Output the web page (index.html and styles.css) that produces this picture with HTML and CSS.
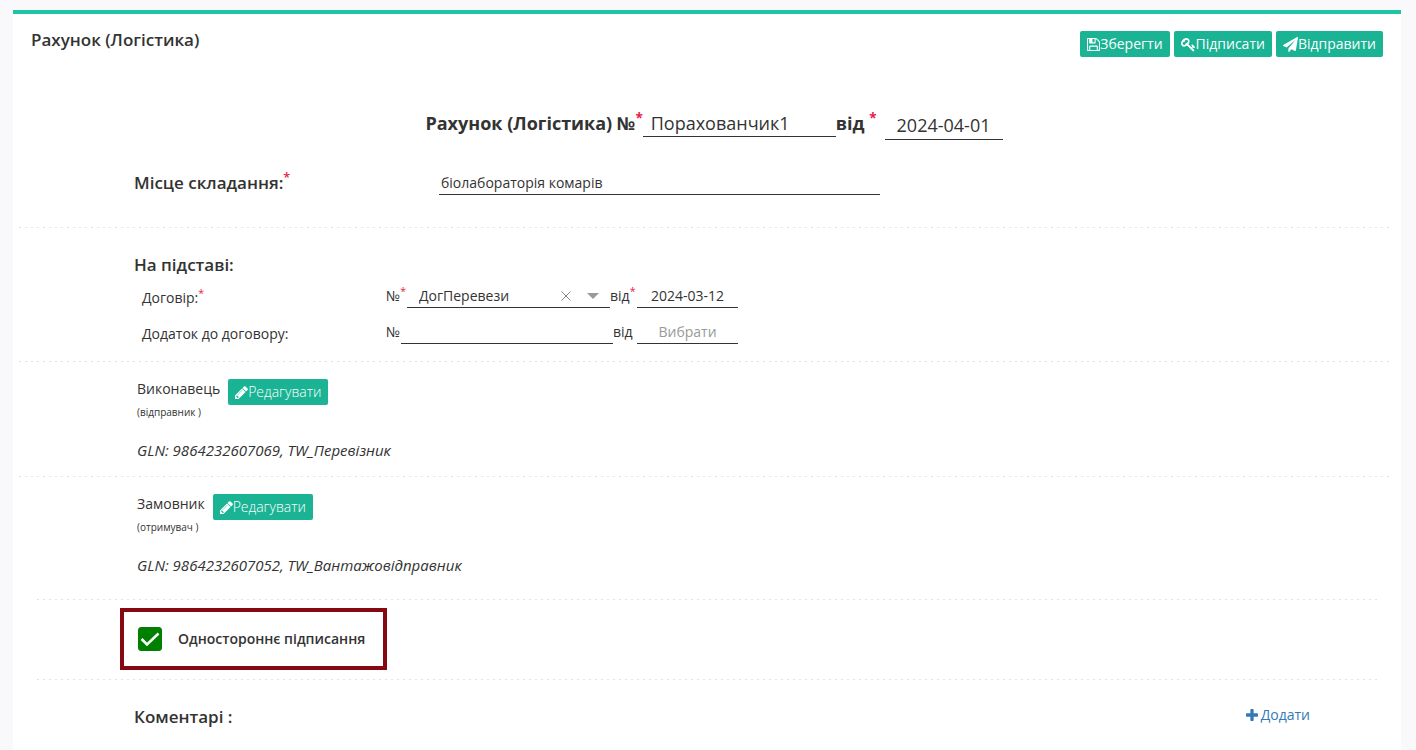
FILE: index.html
```html
<!DOCTYPE html>
<html lang="uk">
<head>
<meta charset="utf-8">
<meta name="viewport" content="width=device-width, initial-scale=1">
<title>Рахунок (Логістика)</title>
<link rel="stylesheet" href="styles.css">
</head>
<body>
<main class="panel">
  <header class="panel-header">
    <h1 class="panel-title">Рахунок (Логістика)</h1>
    <div class="toolbar">
      <button type="button" class="btn"><svg class="icon" viewBox="128 128 1536 1536" aria-hidden="true"><path d="M512 1536h768v-384h-768v384zm896 0h128v-896q0-14-10-38.5t-20-34.5l-281-281q-10-10-34-20t-39-10v416q0 40-28 68t-68 28h-576q-40 0-68-28t-28-68v-416h-128v1280h128v-416q0-40 28-68t68-28h832q40 0 68 28t28 68v416zm-384-928v-320q0-13-9.5-22.5t-22.5-9.5h-192q-13 0-22.5 9.5t-9.5 22.5v320q0 13 9.5 22.5t22.5 9.5h192q13 0 22.5-9.5t9.5-22.5zm640 32v928q0 40-28 68t-68 28h-1344q-40 0-68-28t-28-68v-1344q0-40 28-68t68-28h928q40 0 88 20t76 48l280 280q28 28 48 76t20 88z"/></svg>Зберегти</button>
      <button type="button" class="btn"><svg class="icon icon-wide" viewBox="0 0 1792 1792" aria-hidden="true"><path d="M832 512q0-80-56-136t-136-56-136 56-56 136q0 42 19 83-41-19-83-19-80 0-136 56t-56 136 56 136 136 56 136-56 56-136q0-42-19-83 41 19 83 19 80 0 136-56t56-136zm851 704q0 17-49 66t-66 49q-9 0-28.5-16t-36.5-33-38.5-40-24.5-26l-96 96 220 220q28 28 28 68 0 42-39 81t-81 39q-40 0-68-28l-671-671q-176 131-365 131-163 0-265.5-102.5t-102.5-265.5q0-160 95-313t248-248 313-95q163 0 265.5 102.5t102.5 265.5q0 189-131 365l355 355 96-96q-3-3-26-24.5t-40-38.5-33-36.5-16-28.5q0-17 49-66t66-49q13 0 23 10 6 6 46 44.5t82 79.5 86.5 86 73 78 28.5 41z"/></svg>Підписати</button>
      <button type="button" class="btn"><svg class="icon icon-wide" viewBox="0 0 1792 1792" aria-hidden="true"><path d="M1764 11q33 24 27 64l-256 1536q-5 29-32 45-14 8-31 8-11 0-24-5l-453-185-242 295q-18 23-49 23-13 0-22-4-19-7-30.5-23.5t-11.5-36.5v-349l864-1059-1069 925-395-162q-37-14-40-55-2-40 32-59l1664-960q15-9 32-9 20 0 36 11z"/></svg>Відправити</button>
    </div>
  </header>

  <form>
    <div class="doc-title">
      <label for="doc-number">Рахунок (Логістика) №<sup class="required">*</sup></label>
      <input class="field doc-number" id="doc-number" type="text" value="Порахованчик1">
      <label for="doc-date">від <sup class="required">*</sup></label>
      <input class="field doc-date" id="doc-date" type="text" value="2024-04-01">
    </div>

    <section class="section place">
      <label class="heading" for="place">Місце складання:<sup class="required">*</sup></label>
      <input class="field place-field" id="place" type="text" value="біолабораторія комарів">
    </section>
    <hr class="divider">

    <section class="section basis">
      <h2 class="heading">На підставі:</h2>
      <div class="basis-row">
        <span class="basis-label">Договір:<sup class="required">*</sup></span>
        <label class="number-label number-required" for="contract">№<sup class="required">*</sup></label>
        <div class="combo">
          <input class="combo-input" id="contract" type="text" value="ДогПеревези">
          <button type="button" class="combo-btn" aria-label="Очистити"><svg class="clear" viewBox="0 0 10 10" aria-hidden="true"><path d="M0.500 0.500L9.500 9.500M9.500 0.500L0.500 9.500"/></svg></button>
          <button type="button" class="combo-btn" aria-label="Відкрити"><svg class="arrow" viewBox="0 0 12 6" aria-hidden="true"><path d="M0 0h12L6 6z"/></svg></button>
        </div>
        <label class="date-label date-required" for="contract-date">від<sup class="required">*</sup></label>
        <input class="field date-field" id="contract-date" type="text" value="2024-03-12">
      </div>
      <div class="basis-row">
        <span class="basis-label">Додаток до договору:</span>
        <label class="number-label" for="annex">№</label>
        <input class="field annex-field" id="annex" type="text">
        <label class="date-label" for="annex-date">від</label>
        <input class="field date-field" id="annex-date" type="text" placeholder="Вибрати">
      </div>
    </section>
    <hr class="divider">

    <section class="party">
      <div class="party-head">
        <div><div class="party-name">Виконавець</div><div class="party-role">(відправник )</div></div>
        <button type="button" class="btn btn-light"><svg class="icon" viewBox="128 128 1536 1536" aria-hidden="true"><path d="M491 1536l91-91-235-235-91 91v107h128v128h107zm523-928q0-22-22-22-10 0-17 7l-542 542q-7 7-7 17 0 22 22 22 10 0 17-7l542-542q7-7 7-17zm-54-192l416 416-832 832h-416v-416zm683 96q0 53-37 90l-166 166-416-416 166-165q36-38 90-38 53 0 91 38l235 234q37 39 37 91z"/></svg>Редагувати</button>
      </div>
      <p class="party-info">GLN: 9864232607069, TW_Перевізник</p>
    </section>
    <hr class="divider">

    <section class="party party-last">
      <div class="party-head">
        <div><div class="party-name">Замовник</div><div class="party-role">(отримувач )</div></div>
        <button type="button" class="btn btn-light"><svg class="icon" viewBox="128 128 1536 1536" aria-hidden="true"><path d="M491 1536l91-91-235-235-91 91v107h128v128h107zm523-928q0-22-22-22-10 0-17 7l-542 542q-7 7-7 17 0 22 22 22 10 0 17-7l542-542q7-7 7-17zm-54-192l416 416-832 832h-416v-416zm683 96q0 53-37 90l-166 166-416-416 166-165q36-38 90-38 53 0 91 38l235 234q37 39 37 91z"/></svg>Редагувати</button>
      </div>
      <p class="party-info">GLN: 9864232607052, TW_Вантажовідправник</p>
    </section>
    <hr class="divider divider-inset">

    <section class="signing">
      <label class="sign-box">
        <span class="check">
          <input class="check-input" type="checkbox" checked>
          <svg class="check-mark" viewBox="0 0 24 24" aria-hidden="true"><path d="M3.500 12l5.500 5.500L20.500 6.500"/></svg>
        </span>
        <span>Одностороннє підписання</span>
      </label>
    </section>
    <hr class="divider divider-inset">

    <section class="comments">
      <h2 class="heading">Коментарі :</h2>
      <a class="add-link" href="#add"><svg class="icon" viewBox="192 128 1408 1408" aria-hidden="true"><path d="M1600 736v192q0 40-28 68t-68 28h-416v416q0 40-28 68t-68 28h-192q-40 0-68-28t-28-68v-416h-416q-40 0-68-28t-28-68v-192q0-40 28-68t68-28h416v-416q0-40 28-68t68-28h192q40 0 68 28t28 68v416h416q40 0 68 28t28 68z"/></svg>Додати</a>
    </section>
  </form>
</main>
</body>
</html>
```

FILE: styles.css
```css
* {
  box-sizing: border-box;
}

body {
  margin: 0;
  padding: 10px 15px 0 13px;
  min-height: 100vh;
  display: flex;
  flex-direction: column;
  background: #f9f9fb;
  color: #333;
  font: 14px/20px "Open Sans", "Noto Sans", sans-serif;
}

h1, h2, p {
  margin: 0;
}

input, button {
  font: inherit;
  color: inherit;
}

.panel {
  flex: 1;
  padding: 0 6px;
  background: #fff;
  border-top: 4px solid #1dc5a3;
}

.panel-header {
  display: flex;
  justify-content: space-between;
  align-items: flex-start;
  padding: 17px 12px 0;
}

.panel-title {
  font-size: 17px;
  line-height: 18px;
  font-weight: 600;
}

.toolbar {
  display: flex;
  gap: 4px;
}

.btn {
  display: inline-flex;
  align-items: center;
  height: 26px;
  padding: 0 7px;
  border: 0;
  border-radius: 2px;
  background: #1ab394;
  color: #fff;
  white-space: nowrap;
  cursor: pointer;
}

.btn-light {
  font-weight: 300;
}

.icon {
  width: 13px;
  height: 13px;
  fill: currentColor;
  flex: none;
}

.icon-wide {
  width: 15px;
  height: 15px;
}

.required {
  color: #e6194b;
  font-size: 75%;
  line-height: 0;
  vertical-align: super;
}

.field {
  min-width: 0;
  padding: 0;
  border: 0;
  border-bottom: 1px solid #333;
  border-radius: 0;
  background: transparent;
  outline: 0;
}

.doc-title {
  display: flex;
  justify-content: center;
  align-items: flex-start;
  margin-top: 54px;
  padding-left: 14px;
  line-height: 24px;
  font-size: 18px;
  font-weight: 700;
}

.doc-title .field {
  font-weight: 400;
}

.doc-number {
  width: 193px;
  height: 26px;
  padding: 0 8px 2px;
}

.doc-date {
  width: 118px;
  height: 29px;
  margin-left: 8px;
  text-align: center;
}

.section {
  padding-left: 115px;
}

.divider {
  height: 1px;
  margin: 0 4px 0 0;
  border: 0;
  background: repeating-linear-gradient(90deg, #e0e3e6 0 2px, transparent 2px 6px);
}

.divider-inset {
  margin: 0 18px;
}

.heading {
  font-size: 17px;
  line-height: 24px;
  font-weight: 600;
}

.place {
  display: flex;
  padding-top: 31px;
  padding-bottom: 32px;
}

.place .heading {
  width: 305px;
}

.place-field {
  width: 441px;
  height: 24px;
  padding: 0 2px;
}

.basis {
  padding-top: 25px;
  padding-bottom: 17px;
}

.basis-row {
  display: flex;
  align-items: flex-start;
  height: 24px;
  margin-left: 8px;
  line-height: 24px;
}

.basis-row + .basis-row {
  margin-top: 12px;
}

.basis .heading {
  margin-bottom: 7px;
}

.basis-label {
  width: 244px;
  line-height: 28px;
}

.number-label {
  width: 15px;
}

.number-required {
  width: 21px;
}

.combo {
  display: flex;
  align-items: center;
  width: 203px;
  height: 24px;
  border-bottom: 1px solid #333;
}

.combo-input {
  flex: 1;
  min-width: 0;
  padding: 0 0 0 12px;
  border: 0;
  background: transparent;
  outline: 0;
}

.combo-btn {
  display: flex;
  align-items: center;
  justify-content: center;
  width: 27px;
  height: 23px;
  padding: 0;
  border: 0;
  background: transparent;
  cursor: pointer;
}

.combo-btn:last-child {
  margin-right: 4px;
}

.clear {
  width: 10px;
  height: 10px;
  fill: none;
  stroke: #888;
}

.arrow {
  width: 12px;
  height: 6px;
  fill: #999;
}

.annex-field {
  width: 212px;
  height: 24px;
}

.date-label {
  width: 24px;
}

.date-required {
  width: 27px;
}

.date-field {
  width: 101px;
  height: 24px;
  text-align: center;
}

.date-field::placeholder {
  color: #999;
  opacity: 1;
}

.party {
  padding: 17px 0 16px 118px;
}

.party-head {
  display: flex;
  align-items: flex-start;
  gap: 8px;
  height: 42px;
}

.party-role {
  width: 0;
  margin-top: 5px;
  font-size: 10px;
  line-height: 16px;
  white-space: nowrap;
}

.party-info {
  margin-top: 19px;
  font-size: 15px;
  font-style: italic;
}

.party-last {
  padding-bottom: 24px;
}

.signing {
  padding: 8px 0 9px 101px;
}

.sign-box {
  display: inline-flex;
  align-items: center;
  gap: 16px;
  height: 62px;
  padding: 0 18px 0 14px;
  border: 4px solid #860812;
  font-weight: 600;
  vertical-align: top;
}

.check {
  display: grid;
  width: 24px;
  height: 24px;
}

.check-input,
.check-mark {
  grid-area: 1 / 1;
  width: 24px;
  height: 24px;
  margin: 0;
}

.check-input {
  appearance: none;
  border: 1px solid #008000;
  border-radius: 3px;
  background: #fff;
}

.check-input:checked {
  background: #008000;
}

.check-mark {
  fill: none;
  stroke: #fff;
  stroke-width: 2.5;
  pointer-events: none;
}

.comments {
  display: flex;
  justify-content: space-between;
  align-items: flex-start;
  padding: 25px 85px 0 115px;
}

.add-link {
  display: inline-flex;
  align-items: center;
  gap: 3px;
  color: #337ab7;
  text-decoration: none;
}

.add-link .icon {
  width: 12px;
  height: 12px;
}
```
